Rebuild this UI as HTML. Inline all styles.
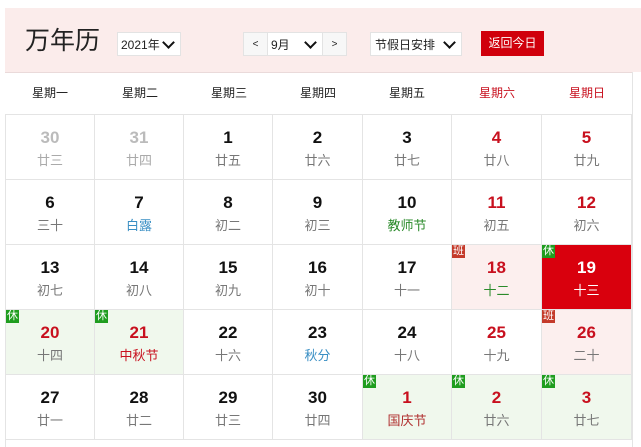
<!DOCTYPE html>
<html><head><meta charset="utf-8"><style>
body{margin:0;width:641px;height:447px;overflow:hidden;background:#fff;font-family:"Liberation Sans","Noto Sans CJK SC",sans-serif;position:relative}
.hd{position:absolute;left:5px;top:8px;width:636px;height:64px;background:#fbeceb;border-bottom:1px solid #eadada}
.t{position:absolute;left:25px;top:26px;font-size:25px;color:#222;line-height:30px}
.sel{position:absolute;top:32px;height:24px;background:#fff;border:1px solid #e3e3e3;font-size:12px;color:#222;line-height:24px;box-sizing:border-box;padding-left:3px}
.chev{position:absolute;top:5px;width:7px;height:7px;border-right:2.5px solid #111;border-bottom:2.5px solid #111;transform:rotate(45deg)}
.btn{position:absolute;left:481px;top:31px;width:63px;height:25px;background:#d0000c;color:#fff;font-size:12px;line-height:25px;text-align:center}
.wk{position:absolute;top:72px;height:42px;width:90px;text-align:center;line-height:42px;font-size:12px;color:#222}
.c{position:absolute;width:89px;height:64px;border-right:1px solid #e4e4e4;border-bottom:1px solid #e4e4e4;text-align:center;box-sizing:content-box}
.n{font-weight:bold;font-size:17px;margin-top:12px;line-height:22px;color:#111}
.l{font-size:13px;color:#777;line-height:20px;margin-top:2px}
.r .n{color:#c8101e}.g .n{color:#bbb}.g .l{color:#aaa}
.tag{position:absolute;left:0;top:0;width:13px;height:13px;font-size:11px;line-height:13px;color:#fff;text-align:center}
.x{background:#1f9d1f}.b{background:#c43a2a}
.pk{background:#fcefee}.gn{background:#f0f8ed}
</style></head><body>
<div class="hd"></div>
<div class="t">万年历</div>
<div class="sel" style="left:117px;width:64px">2021年<div class="chev" style="left:46px"></div></div>
<div class="sel" style="left:243px;width:25px;background:#f7f7f7;padding:0;text-align:center;font-size:10px">&lt;</div>
<div class="sel" style="left:267px;width:56px">9月<div class="chev" style="left:38px"></div></div>
<div class="sel" style="left:322px;width:25px;background:#f7f7f7;padding:0;text-align:center;font-size:10px">&gt;</div>
<div class="sel" style="left:370px;width:92px;padding-left:4px">节假日安排<div class="chev" style="left:74px"></div></div>
<div class="btn">返回今日</div>
<div style="position:absolute;left:5px;top:72px;width:627px;height:42px;border-right:1px solid #e4e4e4;border-bottom:1px solid #e4e4e4"></div>
<div class="wk" style="left:5px">星期一</div><div class="wk" style="left:95px">星期二</div><div class="wk" style="left:184px">星期三</div><div class="wk" style="left:273px">星期四</div><div class="wk" style="left:362px">星期五</div><div class="wk" style="left:452px;color:#c8101e">星期六</div><div class="wk" style="left:542px;color:#c8101e">星期日</div>
<div style="position:absolute;left:5px;top:114px;width:1px;height:333px;background:#e4e4e4"></div>
<div style="position:absolute;left:632px;top:72px;width:9px;height:375px;background:#fff;border-left:1px solid #e4e4e4"></div>
<div id="g"></div>
<script>
var cols=[6,95,184,273,363,452,542],rows=[115,180,245,310,375];
var d=[
[["30","廿三","g"],["31","廿四","g"],["1","廿五"],["2","廿六"],["3","廿七"],["4","廿八","r"],["5","廿九","r"]],
[["6","三十"],["7","白露","","#3a8fc4"],["8","初二"],["9","初三"],["10","教师节","","#2a8a2a"],["11","初五","r"],["12","初六","r"]],
[["13","初七"],["14","初八"],["15","初九"],["16","初十"],["17","十一"],["18","十二","r pk","#2a8a2a","b"],["19","十三","today","","x"]],
[["20","十四","r gn","","x"],["21","中秋节","r gn","#c8101e","x"],["22","十六"],["23","秋分","","#3a8fc4"],["24","十八"],["25","十九","r"],["26","二十","r pk","","b"]],
[["27","廿一"],["28","廿二"],["29","廿三"],["30","廿四"],["1","国庆节","r gn","#b03030","x"],["2","廿六","r gn","","x"],["3","廿七","r gn","","x"]]];
var h="";
d.forEach(function(r,i){r.forEach(function(c,j){
var w=j==6?89:(cols[j+1]-cols[j]-1);
var st="left:"+cols[j]+"px;top:"+rows[i]+"px;width:"+w+"px;";
var cls=c[2]||"";var nc="",lc=c[3]?"color:"+c[3]:"";
if(cls=="today"){st+="background:#d9000d;";nc="color:#fff";lc="color:#fff";}
h+='<div class="c '+cls+'" style="'+st+'">'+(c[4]?'<div class="tag '+c[4]+'">'+(c[4]=="x"?"休":"班")+'</div>':'')+'<div class="n" style="'+nc+'">'+c[0]+'</div><div class="l" style="'+lc+'">'+c[1]+'</div></div>';
});});
document.getElementById("g").innerHTML=h;
</script>
</body></html>
